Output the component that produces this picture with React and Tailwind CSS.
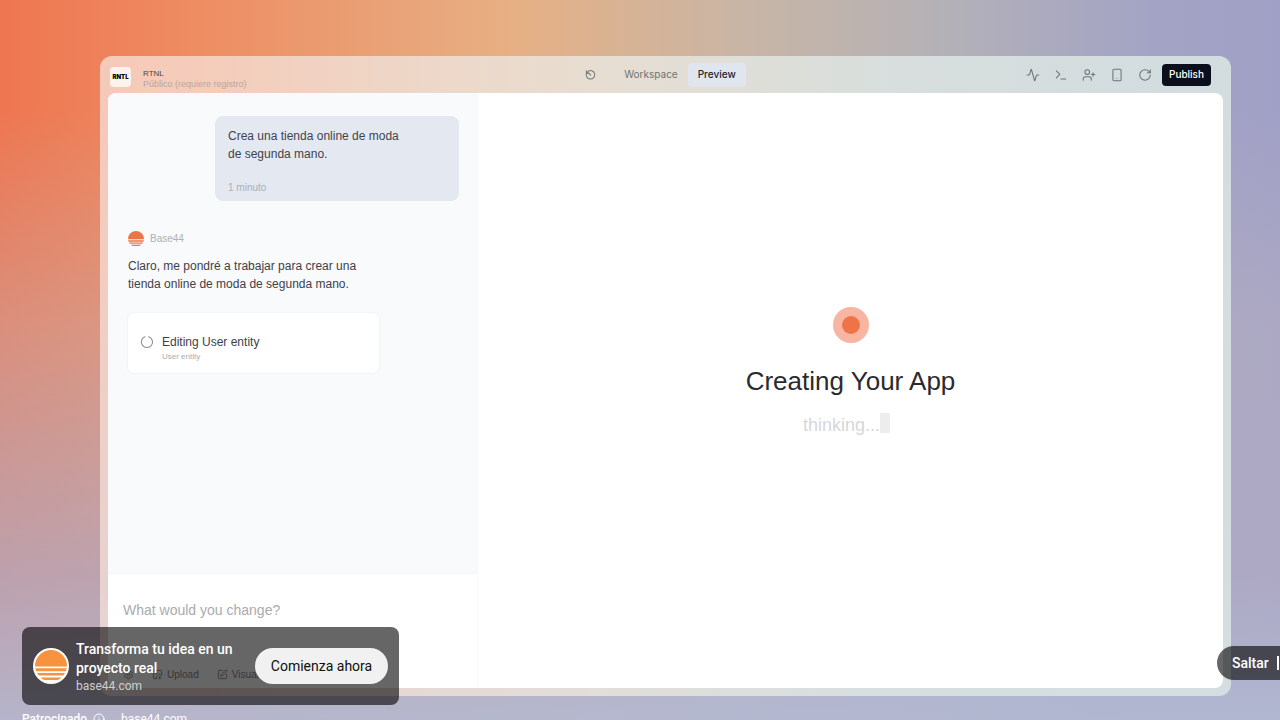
import React, { useState } from 'react'
import { Activity, Terminal, UserPlus, Smartphone, RotateCw, SquarePen, ImageUp, Settings, Info } from 'lucide-react'

const tools = [
    { label: 'Activity', Icon: Activity },
    { label: 'Console', Icon: Terminal },
    { label: 'Invite', Icon: UserPlus },
    { label: 'Mobile', Icon: Smartphone },
    { label: 'Reload', Icon: RotateCw },
]

const SunLogo = ({ className }) => (
    <svg viewBox="0 0 32 32" fill="currentColor" className={className} aria-hidden="true">
        <path d="M0 16a16 16 0 0 1 32 0v.5H0z" />
        <path d="M.3 18.3h31.4a16 16 0 0 1-.8 3H1.100a16 16 0 0 1-.8-3z" />
        <path d="M2 23h28a16 16 0 0 1-1.800 2.600H3.800A16 16 0 0 1 2 23z" />
        <path d="M5.500 27.500h21a16 16 0 0 1-3.800 2.500H9.300a16 16 0 0 1-3.800-2.500z" />
    </svg>
)

const HistoryIcon = () => (
    <svg viewBox="0 0 24 24" className="h-[11px] w-[11px]" fill="none" stroke="currentColor" strokeWidth="2.2" strokeLinecap="round" strokeLinejoin="round">
        <path d="M3 4v5h5" />
        <path d="M3.5 9a9.3 9.3 0 1 0 4-4.4L3.5 9" />
        <path d="M8 9l4.5 4.5" />
    </svg>
)

const Spinner = () => (
    <svg viewBox="0 0 24 24" className="mt-[2px] h-[14px] w-[14px]" fill="none" stroke="currentColor" strokeWidth="1.8" strokeLinecap="round">
        <path d="M15 2.8a9.6 9.6 0 1 1-6.5 .1" />
    </svg>
)

const Header = () => {
    const [tab, setTab] = useState('Preview')
    return (
        <header className="grid h-[37px] grid-cols-[1fr_auto_1fr] items-center">
            <div className="flex items-center gap-3 pt-1 pl-[2px]">
                <span className="flex h-5 w-[21px] items-center justify-center rounded bg-[#fbf3ec] text-[6px] font-black text-black">RNTL</span>
                <div className="pt-1 font-['Liberation_Sans',sans-serif]">
                    <p className="text-[8px] leading-[11px] text-[#4d4340]">RTNL</p>
                    <p className="text-[9px] leading-[11px] text-[#b9a69f]">Público (requiere registro)</p>
                </div>
            </div>
            <nav className="flex items-center">
                <button aria-label="History" className="mr-[18px] text-[#737778]"><HistoryIcon /></button>
                {['Workspace', 'Preview'].map((name) => (
                    <button
                        key={name}
                        onClick={() => setTab(name)}
                        className={`h-6 rounded px-[10px] text-[10px] ${tab === name ? 'bg-[#e0e5ee] font-medium text-[#1d2330]' : 'text-[#6f7476]'}`}
                    >
                        {name}
                    </button>
                ))}
            </nav>
            <div className="flex items-center justify-end gap-[14px] pr-3">
                {tools.map(({ label, Icon }) => (
                    <button key={label} aria-label={label} className="text-[#6c7677]"><Icon size={14} strokeWidth={1.8} /></button>
                ))}
                <button className="-ml-1 h-[22px] w-[49px] rounded bg-[#0b0f1c] text-[10px] font-medium text-white">Publish</button>
            </div>
        </header>
    )
}

const Chat = () => (
    <div className="flex flex-1 flex-col bg-[#f8fafc] pt-[23px] pr-[18px] pl-5 text-[#3f4147]">
        <div className="h-[85px] w-[244px] self-end rounded-lg bg-[#e4e8f1] px-[13px] pt-[11px] text-[12px] leading-[18px] text-[#41444c]">
            <p>Crea una tienda online de moda<br />de segunda mano.</p>
            <p className="pt-4 text-[10px] text-[#abafb9]">1 minuto</p>
        </div>
        <div className="mt-[30px] flex items-center gap-[6px] text-[10px] leading-4 text-[#adb0b5]">
            <SunLogo className="h-4 w-4 text-[#ee7448]" />
            Base44
        </div>
        <p className="mt-[10px] text-[12px] leading-[18px]">Claro, me pondré a trabajar para crear una<br />tienda online de moda de segunda mano.</p>
        <div className="mt-5 flex h-[60px] w-[251px] gap-2 rounded-md bg-white px-3 pt-5 shadow-[0_0_2px_#e2e6ec]">
            <span className="text-[#8a8e94]"><Spinner /></span>
            <div>
                <p className="text-[12px] leading-[19px]">Editing User entity</p>
                <p className="text-[8px] leading-[10px] text-[#a9acb1]">User entity</p>
            </div>
        </div>
    </div>
)

const Composer = () => (
    <div className="flex h-[115px] flex-col justify-between border-t border-[#f3f5f7] bg-white pt-6 pr-4 pb-[6px] pl-[15px]">
        <input
            aria-label="What would you change?"
            placeholder="What would you change?"
            className="w-full text-[14px] leading-6 outline-none placeholder:text-[#a9abae]"
        />
        <div className="flex items-center gap-[18px] text-[10px] text-[#8a8a8a]">
            <button aria-label="Settings"><Settings size={11} /></button>
            <button className="flex items-center gap-1"><ImageUp size={11} />Upload</button>
            <button className="flex items-center gap-1"><SquarePen size={11} />Visual</button>
        </div>
    </div>
)

const AdCard = () => (
    <aside className="absolute top-[627px] left-[22px] font-['Roboto',sans-serif]">
        <div className="flex h-[78px] w-[377px] items-center rounded-lg bg-black/60 px-[11px] text-white">
            <span className="flex h-9 w-9 shrink-0 items-center justify-center rounded-full bg-white">
                <SunLogo className="h-8 w-8 text-[#f7933f]" />
            </span>
            <div className="ml-[7px] flex-1 pt-px">
                <p className="text-[14px] leading-[19px] font-medium">Transforma tu idea en un<br />proyecto real</p>
                <a href="#base44" className="block text-[12px] leading-4 text-[#cfcfcf]">base44.com</a>
            </div>
            <button className="h-9 w-[133px] rounded-full bg-[#f1f1f1] text-[14px] text-[#0f0f0f]">Comienza ahora</button>
        </div>
        <div className="mt-[6px] flex items-center gap-[6px] text-[12px] leading-4 text-white">
            <span className="font-medium">Patrocinado</span>
            <Info size={12} />
            <a href="#base44" className="ml-[10px]">base44.com</a>
        </div>
    </aside>
)

export default function App() {
    return (
        <div className="relative flex h-screen min-h-[720px] overflow-hidden bg-[linear-gradient(to_bottom,#c8b8b400_15%,#bdb4be66_45%,#b0abc4cc_80%,#b2b8d2f0_100%),linear-gradient(to_right,#ee7650_0%,#ee8c62_15%,#e6b084_40%,#c8b5a6_58%,#b3b1b7_74%,#a3a3c5_90%,#a0a0c6_100%)] pt-14 pr-[49px] pb-6 pl-[100px] font-['Inter',sans-serif]">
            <main className="flex flex-1 flex-col rounded-xl bg-[linear-gradient(to_right,#f8e3dbbb_0%,#f6dcd0cc_10%,#e8e4dcdd_45%,#dce5e3dd_70%,#dae5e3dd_100%)] px-2 pb-2">
                <Header />
                <div className="flex flex-1 overflow-hidden rounded-lg bg-white font-['Liberation_Sans',sans-serif]">
                    <section className="flex w-[370px] shrink-0 flex-col border-r border-[#f8f9fb]">
                        <Chat />
                        <Composer />
                    </section>
                    <section className="flex flex-1 flex-col items-center justify-center pb-[38px]">
                        <span className="flex h-9 w-9 items-center justify-center rounded-full bg-[#f8b5a1]">
                            <span className="h-[18px] w-[18px] rounded-full bg-[#ee7448]" />
                        </span>
                        <h1 className="mt-5 text-[26px] leading-9 text-[#2a2b2d]">Creating Your App</h1>
                        <p className="mt-[14px] mr-2 flex text-[18px] leading-6 text-[#d6d7d9]">thinking...<span className="h-5 w-[10px] bg-[#ededee]" /></p>
                    </section>
                </div>
            </main>
            <AdCard />
            <button className="absolute top-[646px] left-[1217px] flex h-[34px] items-center gap-2 rounded-full bg-black/60 pr-4 pl-[15px] font-['Roboto',sans-serif] text-[14px] font-medium text-white">
                Saltar
                <svg viewBox="0 0 14 14" className="h-[14px] w-[14px]" fill="currentColor"><path d="M0 0h2v14H0zM4 0l8 7-8 7z" /></svg>
            </button>
        </div>
    )
}
